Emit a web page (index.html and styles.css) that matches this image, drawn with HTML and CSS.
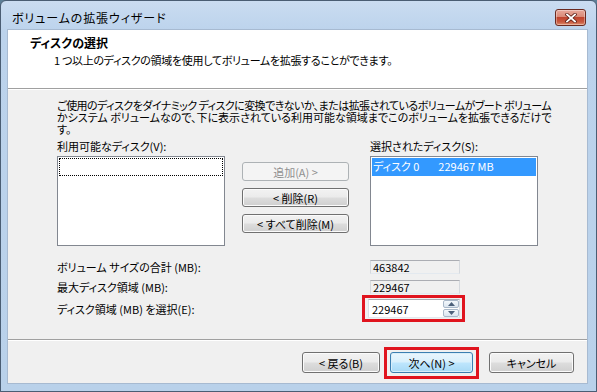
FILE: index.html
```html
<!DOCTYPE html>
<html lang="ja">
<head>
<meta charset="utf-8">
<title>ボリュームの拡張ウィザード</title>
<link rel="stylesheet" href="styles.css">
</head>
<body>
<div class="window">
  <div class="titlebar">
    <span class="title">ボリュームの拡張ウィザード</span>
    <div class="close">
      <svg width="12" height="10" viewBox="0 0 12 10">
        <path d="M2 1.5 L10 8.5 M10 1.5 L2 8.5" stroke="#5a1d14" stroke-width="3.4" stroke-linecap="square" fill="none"/>
        <path d="M2 1.5 L10 8.5 M10 1.5 L2 8.5" stroke="#ffffff" stroke-width="1.8" stroke-linecap="square" fill="none"/>
      </svg>
    </div>
  </div>
  <div class="client">
    <div class="header">
      <div class="h-title">ディスクの選択</div>
      <div class="h-sub">1 つ以上のディスクの領域を使用してボリュームを拡張することができます。</div>
    </div>
    <div class="body">
      <div class="desc">
        <div class="line l1">ご使用のディスクをダイナミック ディスクに変換できないか、または拡張されているボリュームがブート ボリューム</div>
        <div class="line">かシステム ボリュームなので、下に表示されている利用可能な領域までこのボリュームを拡張できるだけで</div>
        <div class="line">す。</div>
      </div>
      <div class="lists">
        <div class="col">
          <div class="label">利用可能なディスク(V):</div>
          <div class="listbox"><div class="focus"></div></div>
        </div>
        <div class="mid">
          <div class="btn disabled">追加(A) &gt;</div>
          <div class="btn">&lt; 削除(R)</div>
          <div class="btn">&lt; すべて削除(M)</div>
        </div>
        <div class="col">
          <div class="label">選択されたディスク(S):</div>
          <div class="listbox"><div class="item selected"><span class="disk">ディスク 0</span><span>229467 MB</span></div></div>
        </div>
      </div>
      <div class="summary">
        <div class="row r1">
          <div class="slabel">ボリューム サイズの合計 (MB):</div>
          <div class="field ro">463842</div>
        </div>
        <div class="row r2">
          <div class="slabel">最大ディスク領域 (MB):</div>
          <div class="field ro">229467</div>
        </div>
        <div class="row r3">
          <div class="slabel">ディスク領域 (MB) を選択(E):</div>
          <div class="mark spinmark">
            <div class="spin">
              <span class="val">229467</span>
              <div class="arrows">
                <div class="arr up"><svg width="7" height="4" viewBox="0 0 7 4"><path d="M0 4 L3.5 0 L7 4 Z" fill="#4c607a"/></svg></div>
                <div class="arr down"><svg width="7" height="4" viewBox="0 0 7 4"><path d="M0 0 L3.5 4 L7 0 Z" fill="#4c607a"/></svg></div>
              </div>
            </div>
          </div>
        </div>
      </div>
    </div>
    <div class="footer">
      <div class="btn fbtn back">&lt; 戻る(B)</div>
      <div class="mark nextmark"><div class="btn fbtn next">次へ(N) &gt;</div></div>
      <div class="btn fbtn cancel">キャンセル</div>
    </div>
  </div>
</div>
</body>
</html>
```
FILE: styles.css
```css
* { box-sizing: border-box; }
html, body { margin: 0; padding: 0; }
body {
  width: 597px;
  height: 392px;
  overflow: hidden;
  background: #5d7f97;
  font-family: "Noto Sans CJK JP", "Liberation Sans", sans-serif;
  font-size: 11px;
  color: #000;
  font-feature-settings: "palt";
}
.window {
  width: 597px;
  height: 392px;
  border: 1px solid #4a5d73;
  border-radius: 6px 6px 0 0;
  background: linear-gradient(#cadcf1 0, #bcd3ec 30px, #b9d1ea 100%);
  padding: 0 9px 8px 7px;
  display: flex;
  flex-direction: column;
}
.titlebar {
  height: 29px;
  display: flex;
  justify-content: space-between;
  align-items: flex-start;
  padding-left: 4px;
  padding-right: 1px;
}
.title {
  font-size: 12px;
  line-height: 16px;
  margin-top: 9px;
  letter-spacing: 0.9px;
}
.close {
  margin-top: 8px;
  width: 31px;
  height: 17px;
  border: 1px solid #6b2a20;
  border-radius: 3px;
  background: linear-gradient(#e8a89a 0%, #d98a78 45%, #c0442e 50%, #c85a40 80%, #e09070 100%);
  box-shadow: inset 0 0 0 1px rgba(255,255,255,0.35);
  display: flex;
  align-items: center;
  justify-content: center;
}
.client {
  flex: 1;
  background: #f0f0f0;
  display: flex;
  flex-direction: column;
  box-shadow: 0 0 0 1px #a7bad1;
}
.header {
  height: 59px;
  background: #fff;
  border-bottom: 1px solid #a0a0a0;
  padding: 6px 0 0 22px;
}
.h-title {
  font-weight: bold;
  line-height: 14px;
  font-size: 12px;
}
.h-sub {
  margin-top: 3px;
  margin-left: 24px;
  line-height: 14px;
  letter-spacing: -0.3px;
}
.body {
  flex: 1;
  border-top: 1px solid #fff;
  padding: 9px 0 0 49px;
}
.desc .line {
  line-height: 12px;
  white-space: nowrap;
}
.desc .l1 { letter-spacing: -0.55px; }
.lists {
  display: flex;
  margin-top: 4px;
}
.label {
  line-height: 14px;
  height: 14px;
  margin-bottom: 3px;
  white-space: nowrap;
}
.listbox {
  width: 168px;
  height: 90px;
  background: #fff;
  border: 1px solid #828790;
  padding: 1px;
}
.focus {
  height: 18px;
  border: 1px dotted #000;
}
.item {
  height: 18px;
  line-height: 17px;
  padding-left: 1px;
  white-space: nowrap;
}
.item.selected {
  background: #3399ff;
  color: #fff;
}
.disk { margin-right: 19px; }
.mid {
  width: 107px;
  margin: 23px 21px 0 17px;
  display: flex;
  flex-direction: column;
  gap: 7px;
}
.btn {
  height: 19px;
  border: 1px solid #707070;
  border-radius: 3px;
  background: linear-gradient(#f2f2f2 0%, #ebebeb 48%, #dddddd 52%, #cfcfcf 100%);
  box-shadow: inset 0 0 0 1px #fbfbfb;
  display: flex;
  align-items: center;
  justify-content: center;
  white-space: nowrap;
  line-height: 14px;
}
.btn.disabled {
  border-color: #adb2b5;
  background: #f4f4f4;
  box-shadow: none;
  color: #8f8f8f;
}
.summary {
  margin-top: 14px;
  display: flex;
  flex-direction: column;
}
.row {
  display: grid;
  grid-template-columns: 305px auto;
  align-items: center;
}
.r2 { margin-top: 6px; }
.r3 { margin-top: 1px; }
.slabel {
  white-space: nowrap;
  line-height: 14px;
}
.field {
  width: 90px;
  height: 14px;
  margin-left: 8px;
  line-height: 12px;
  padding-left: 2px;
  border: 1px solid #e3e9ef;
  border-top-color: #abadb3;
  border-left-color: #d5d9de;
  border-right-color: #d5d9de;
  font-size: 11px;
}
.field.ro { background: #f0f0f0; }
.mark {
  border: 3px solid #e0141e;
}
.spinmark {
  width: 103px;
  padding: 1px 2px 1px 3px;
}
.spin {
  width: 92px;
  height: 19px;
  background: #fff;
  border: 1px solid #e3e9ef;
  border-top-color: #abadb3;
  border-left-color: #dbdfe6;
  border-right-color: #dbdfe6;
  display: flex;
  align-items: center;
  justify-content: space-between;
  padding-left: 3px;
}
.val { line-height: 14px; }
.arrows {
  width: 16px;
  height: 17px;
  display: flex;
  flex-direction: column;
  gap: 1px;
}
.arr {
  flex: 1;
  border: 1px solid #a9b8c9;
  border-radius: 2px;
  background: linear-gradient(#f4f8fc, #dbe5ef);
  display: flex;
  align-items: center;
  justify-content: center;
}
.footer {
  height: 44px;
  border-top: 1px solid #a0a0a0;
  box-shadow: inset 0 1px 0 #fff;
  display: flex;
  align-items: flex-start;
  padding: 7px 13px 0 0;
  justify-content: flex-end;
}
.fbtn {
  height: 21px;
  margin-top: 5px;
}
.back { width: 78px; margin-right: 4px; }
.nextmark {
  padding: 2px 3px 3px 3px;
  margin-right: 10px;
}
.next {
  width: 83px;
  margin-top: 0;
  border-color: #3c7fb1;
  background: linear-gradient(#eaf6fd 0%, #d9f0fc 48%, #bee6fd 52%, #a7d9f5 100%);
  box-shadow: inset 0 0 0 1px #d8eefa;
}
.cancel { width: 85px; }
```
